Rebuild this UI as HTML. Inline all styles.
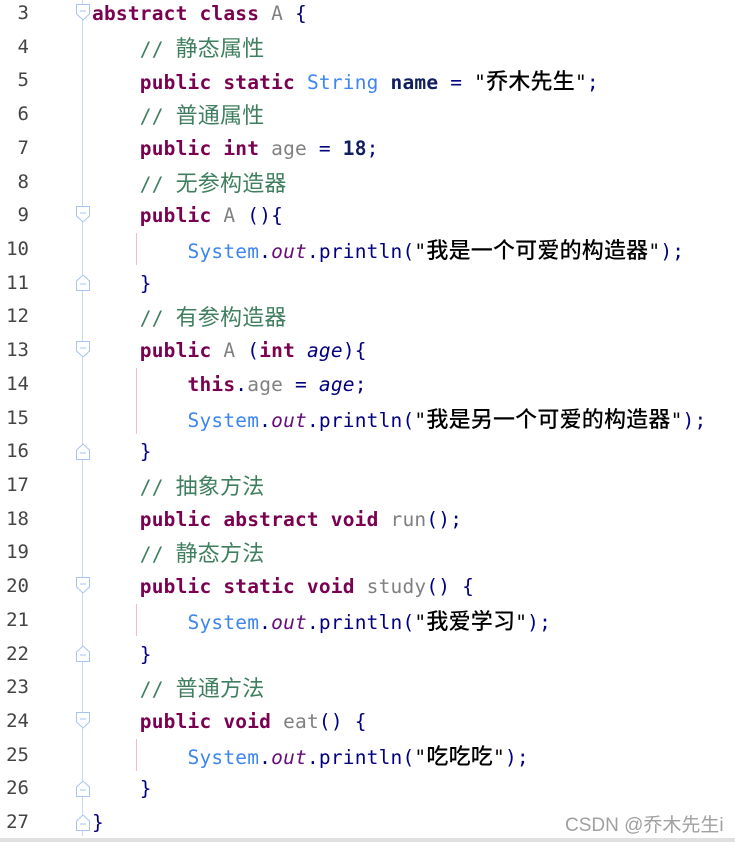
<!DOCTYPE html><html><head><meta charset="utf-8"><style>
body{margin:0;width:735px;height:842px;background:#fff;position:relative;overflow:hidden;font-family:"DejaVu Sans Mono","Liberation Mono","Noto Sans CJK SC",monospace;}
.vl{position:absolute;left:82px;top:0;width:1px;height:836px;background:#c6d8f5}
.ln{position:absolute;left:0;width:29px;text-align:right;font-size:19px;color:#444;line-height:33.7px}
.c{position:absolute;left:92px;font-size:19.5px;line-height:33.7px;white-space:pre;color:#000080;letter-spacing:0.2px}
.k{color:#7a0050;font-weight:bold}.s{color:#000;font-weight:500}.cm{color:#3f7f5f}.t{color:#3d86f0}.g{color:#808080}.o{color:#660e7a;font-style:italic}.n{font-weight:bold;color:#0f1f5f}.p{color:#000080}.i{font-style:italic;color:#000080}
.cj{font-family:"Noto Sans CJK SC",sans-serif;font-size:22px}
.s .cj{font-weight:500}
.pk{position:absolute;left:136px;width:1px;background:#f5b8d8}
.f{position:absolute;left:76px}
.bot{position:absolute;left:0;top:838px;width:735px;height:4px;background:#e0e0e0}
.wm{position:absolute;left:565px;top:810px;font-family:"Liberation Sans","Noto Sans CJK SC",sans-serif;font-size:19px;color:#a0a0a0}
</style></head><body>
<div class="vl"></div>
<div class="pk" style="top:233px;height:32px"></div>
<div class="pk" style="top:368px;height:66px"></div>
<div class="pk" style="top:604px;height:32px"></div>
<div class="pk" style="top:739px;height:32px"></div>
<svg class="f" style="top:4px" width="14" height="18"><path d="M0.5 0.5H13.5V10L7 16L0.5 10Z" fill="#fff" stroke="#a8c4f0"/><path d="M4 7H10" stroke="#a8c4f0"/></svg>
<svg class="f" style="top:206px" width="14" height="18"><path d="M0.5 0.5H13.5V10L7 16L0.5 10Z" fill="#fff" stroke="#a8c4f0"/><path d="M4 7H10" stroke="#a8c4f0"/></svg>
<svg class="f" style="top:341px" width="14" height="18"><path d="M0.5 0.5H13.5V10L7 16L0.5 10Z" fill="#fff" stroke="#a8c4f0"/><path d="M4 7H10" stroke="#a8c4f0"/></svg>
<svg class="f" style="top:577px" width="14" height="18"><path d="M0.5 0.5H13.5V10L7 16L0.5 10Z" fill="#fff" stroke="#a8c4f0"/><path d="M4 7H10" stroke="#a8c4f0"/></svg>
<svg class="f" style="top:712px" width="14" height="18"><path d="M0.5 0.5H13.5V10L7 16L0.5 10Z" fill="#fff" stroke="#a8c4f0"/><path d="M4 7H10" stroke="#a8c4f0"/></svg>
<svg class="f" style="top:273px" width="14" height="18"><path d="M0.5 17.5H13.5V8L7 2L0.5 8Z" fill="#fff" stroke="#a8c4f0"/><path d="M4 11H10" stroke="#a8c4f0"/></svg>
<svg class="f" style="top:442px" width="14" height="18"><path d="M0.5 17.5H13.5V8L7 2L0.5 8Z" fill="#fff" stroke="#a8c4f0"/><path d="M4 11H10" stroke="#a8c4f0"/></svg>
<svg class="f" style="top:644px" width="14" height="18"><path d="M0.5 17.5H13.5V8L7 2L0.5 8Z" fill="#fff" stroke="#a8c4f0"/><path d="M4 11H10" stroke="#a8c4f0"/></svg>
<svg class="f" style="top:779px" width="14" height="18"><path d="M0.5 17.5H13.5V8L7 2L0.5 8Z" fill="#fff" stroke="#a8c4f0"/><path d="M4 11H10" stroke="#a8c4f0"/></svg>
<svg class="f" style="top:813px" width="14" height="18"><path d="M0.5 17.5H13.5V8L7 2L0.5 8Z" fill="#fff" stroke="#a8c4f0"/><path d="M4 11H10" stroke="#a8c4f0"/></svg>

<div class="ln" style="top:-3px">3</div><div class="c" style="top:-3px"><span class="k">abstract class</span> <span class="g">A</span> {</div>
<div class="ln" style="top:31px">4</div><div class="c" style="top:31px">    <span class="cm">// <span class="cj">静态属性</span></span></div>
<div class="ln" style="top:64px">5</div><div class="c" style="top:64px">    <span class="k">public static</span> <span class="t">String</span> <span class="n">name</span> <span class="p">=</span> <span class="s">"<span class="cj">乔木先生</span>"</span>;</div>
<div class="ln" style="top:98px">6</div><div class="c" style="top:98px">    <span class="cm">// <span class="cj">普通属性</span></span></div>
<div class="ln" style="top:132px">7</div><div class="c" style="top:132px">    <span class="k">public int</span> <span class="g">age</span> = <span class="n">18</span>;</div>
<div class="ln" style="top:166px">8</div><div class="c" style="top:166px">    <span class="cm">// <span class="cj">无参构造器</span></span></div>
<div class="ln" style="top:199px">9</div><div class="c" style="top:199px">    <span class="k">public</span> <span class="g">A</span> (){</div>
<div class="ln" style="top:233px">10</div><div class="c" style="top:233px">        <span class="t">System</span>.<span class="o">out</span>.println(<span class="s">"<span class="cj">我是一个可爱的构造器</span>"</span>);</div>
<div class="ln" style="top:267px">11</div><div class="c" style="top:267px">    }</div>
<div class="ln" style="top:300px">12</div><div class="c" style="top:300px">    <span class="cm">// <span class="cj">有参构造器</span></span></div>
<div class="ln" style="top:334px">13</div><div class="c" style="top:334px">    <span class="k">public</span> <span class="g">A</span> (<span class="k">int</span> <span class="i">age</span>){</div>
<div class="ln" style="top:368px">14</div><div class="c" style="top:368px">        <span class="k">this</span>.<span class="g">age</span> = <span class="i">age</span>;</div>
<div class="ln" style="top:402px">15</div><div class="c" style="top:402px">        <span class="t">System</span>.<span class="o">out</span>.println(<span class="s">"<span class="cj">我是另一个可爱的构造器</span>"</span>);</div>
<div class="ln" style="top:435px">16</div><div class="c" style="top:435px">    }</div>
<div class="ln" style="top:469px">17</div><div class="c" style="top:469px">    <span class="cm">// <span class="cj">抽象方法</span></span></div>
<div class="ln" style="top:503px">18</div><div class="c" style="top:503px">    <span class="k">public abstract void</span> <span class="g">run</span>();</div>
<div class="ln" style="top:536px">19</div><div class="c" style="top:536px">    <span class="cm">// <span class="cj">静态方法</span></span></div>
<div class="ln" style="top:570px">20</div><div class="c" style="top:570px">    <span class="k">public static void</span> <span class="g">study</span>() {</div>
<div class="ln" style="top:604px">21</div><div class="c" style="top:604px">        <span class="t">System</span>.<span class="o">out</span>.println(<span class="s">"<span class="cj">我爱学习</span>"</span>);</div>
<div class="ln" style="top:638px">22</div><div class="c" style="top:638px">    }</div>
<div class="ln" style="top:671px">23</div><div class="c" style="top:671px">    <span class="cm">// <span class="cj">普通方法</span></span></div>
<div class="ln" style="top:705px">24</div><div class="c" style="top:705px">    <span class="k">public void</span> <span class="g">eat</span>() {</div>
<div class="ln" style="top:739px">25</div><div class="c" style="top:739px">        <span class="t">System</span>.<span class="o">out</span>.println(<span class="s">"<span class="cj">吃吃吃</span>"</span>);</div>
<div class="ln" style="top:772px">26</div><div class="c" style="top:772px">    }</div>
<div class="ln" style="top:806px">27</div><div class="c" style="top:806px">}</div>
<div class="wm">CSDN @乔木先生i</div>
<div class="bot"></div>
</body></html>
